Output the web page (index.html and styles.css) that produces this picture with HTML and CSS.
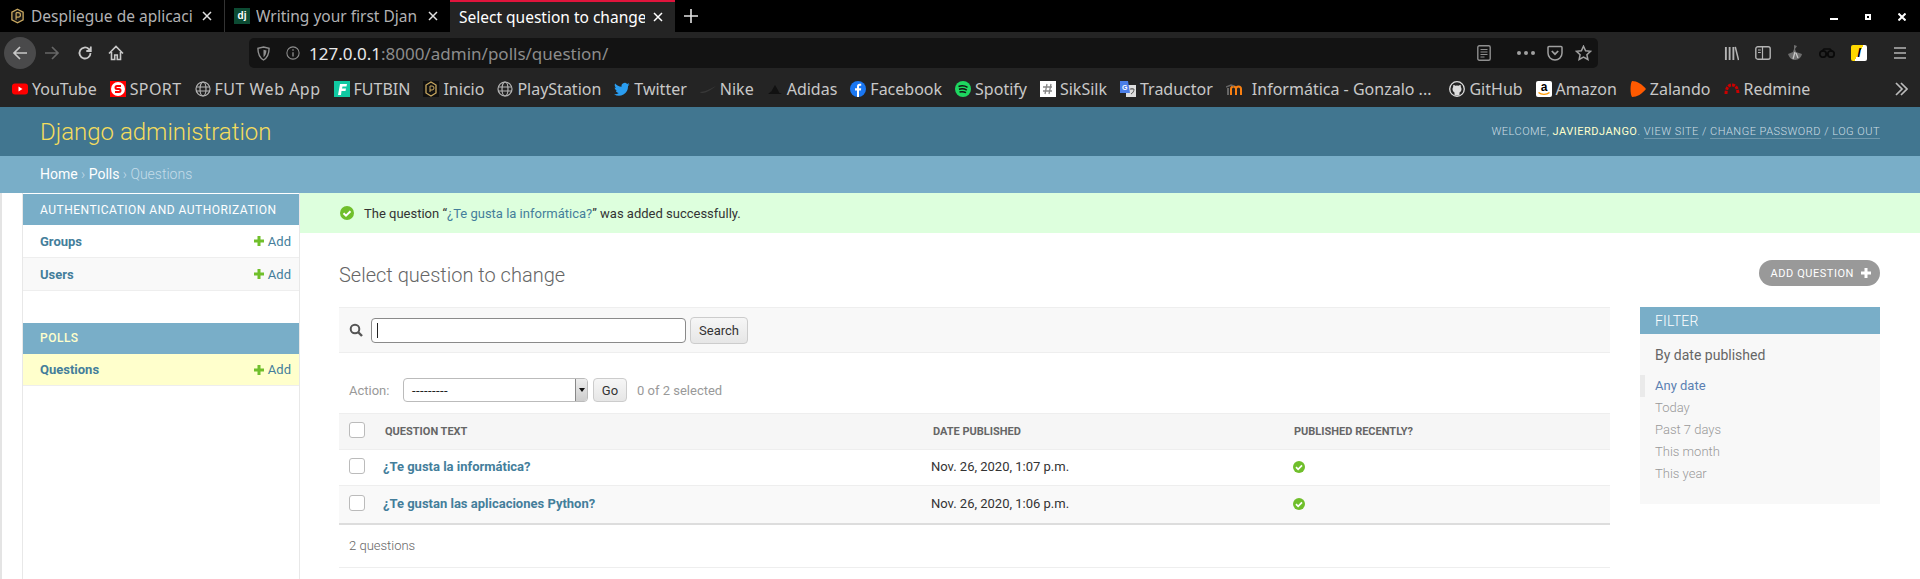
FILE: index.html
```html
<!DOCTYPE html>
<html lang="es">
<head>
<meta charset="utf-8">
<title>Select question to change</title>
<link rel="stylesheet" href="styles.css">
</head>
<body>
<div class="browser">
  <div class="tabbar">
    <div class="tab tab-sep">
      <svg class="fav" viewBox="0 0 16 16"><path d="M8 .8l6 3.200v8l-6 3.200-6-3.200V4z" fill="#151515" stroke="#c9a860" stroke-width="1.400"/><path d="M6.500 12V4.500M6.500 4.500h2.300a2.300 2.300 0 010 4.600H6.500" fill="none" stroke="#c9a860" stroke-width="1.300"/></svg>
      <span class="tab-title">Despliegue de aplicaci</span><svg class="tab-x" viewBox="0 0 10 10"><path d="M1 1l8 8M9 1l-8 8" stroke="#e0e0e0" stroke-width="1.500"/></svg>
    </div>
    <div class="tab tab-second">
      <span class="dj">dj</span>
      <span class="tab-title">Writing your first Djan</span><svg class="tab-x" viewBox="0 0 10 10"><path d="M1 1l8 8M9 1l-8 8" stroke="#e0e0e0" stroke-width="1.500"/></svg>
    </div>
    <div class="tab tab-active">
      <span class="tab-title">Select question to change</span><svg class="tab-x" viewBox="0 0 10 10"><path d="M1 1l8 8M9 1l-8 8" stroke="#fff" stroke-width="1.500"/></svg>
    </div>
    <svg class="newtab" viewBox="0 0 14 14"><path d="M7 0v14M0 7h14" stroke="#e4e4e4" stroke-width="1.600"/></svg>
    <div class="winbtns">
      <span class="win-min"></span><span class="win-max"></span>
      <svg class="win-x" viewBox="0 0 8 8"><path d="M.5.5l7 7M7.500.5l-7 7" stroke="#fff" stroke-width="2"/></svg>
    </div>
  </div>
  <div class="toolbar">
    <span class="backbtn"><svg viewBox="0 0 16 16"><path d="M15 8H2M8 2L2 8l6 6" fill="none" stroke="#c8c8c8" stroke-width="1.700"/></svg></span>
    <svg class="tool t-fwd" viewBox="0 0 16 16"><path d="M1 8h13M8 2l6 6-6 6" fill="none" stroke="#666" stroke-width="1.700"/></svg>
    <svg class="tool t-rel" viewBox="0 0 16 16"><path d="M13.500 8a5.500 5.500 0 11-1.700-4l1.700 1.700M13.800 1.500v4.500H9.300" fill="none" stroke="#c8c8c8" stroke-width="1.800"/></svg>
    <svg class="tool t-home" viewBox="0 0 16 16"><path d="M1 8.500L8 1.500l7 7M3.500 7v7.500h3.200v-4.500h2.600v4.500h3.200V7" fill="none" stroke="#c8c8c8" stroke-width="1.600"/></svg>
    <div class="urlbar">
      <svg class="u-shield" viewBox="0 0 14 16"><path d="M7 1l6 1.500c0 6.500-2 10-6 12.500C3 12.500 1 9 1 2.500z" fill="none" stroke="#8f8f8f" stroke-width="1.500"/><path d="M7 4l3.200.8C10 8 9 10.500 7 12z" fill="#8f8f8f"/></svg>
      <svg class="u-info" viewBox="0 0 16 16"><circle cx="8" cy="8" r="7" fill="none" stroke="#8f8f8f" stroke-width="1.200"/><path d="M8 7v5M8 3.800v1.700" stroke="#8f8f8f" stroke-width="1.500"/></svg>
      <span class="url"><span class="url-host">127.0.0.1</span>:8000/admin/polls/question/</span>
      <svg class="u-reader" viewBox="0 0 14 16"><rect x=".8" y=".8" width="12.400" height="14.400" rx="1.500" fill="none" stroke="#8f8f8f" stroke-width="1.400"/><path d="M3.500 4.500h7M3.500 7h7M3.500 9.500h7M3.500 12h4" stroke="#8f8f8f" stroke-width="1.100"/></svg>
      <span class="u-dots"><i></i><i></i><i></i></span>
      <svg class="u-pocket" viewBox="0 0 16 16"><path d="M2 1.500h12a1 1 0 011 1V8a7 7 0 01-14 0V2.500a1 1 0 011-1z" fill="none" stroke="#a0a0a0" stroke-width="1.500"/><path d="M4.800 6l3.200 3.200L11.200 6" fill="none" stroke="#a0a0a0" stroke-width="1.700"/></svg>
      <svg class="u-star" viewBox="0 0 16 16"><path d="M8 1.200l2.100 4.500 4.900.6-3.600 3.400 1 4.800L8 12.100l-4.400 2.400 1-4.800L1 6.300l4.900-.6z" fill="none" stroke="#a0a0a0" stroke-width="1.500"/></svg>
    </div>
    <div class="tool-right">
      <svg class="t-lib" viewBox="0 0 16 16"><path d="M2 1v14M6 1v14M10 1v14" stroke="#b4b4b4" stroke-width="2" fill="none"/><path d="M12 1l3.500 14" stroke="#b4b4b4" stroke-width="1.600"/></svg>
      <svg class="t-side" viewBox="0 0 16 14"><rect x=".8" y=".8" width="14.400" height="12.400" rx="2" fill="none" stroke="#b4b4b4" stroke-width="1.400"/><path d="M7.500 1v12M3 4h2.800M3 6.500h2.800" stroke="#b4b4b4" stroke-width="1.200"/></svg>
      <svg class="t-ext1" viewBox="0 0 16 16"><path d="M7 0l3 1-2 3 1 3 6 2c-.5 3-3.500 6-7 6s-6-3-7-6l5-2 1-3z" fill="#6e6e6e"/><path d="M8 7l-2 7M9 8l2 5" stroke="#c8c8c8" stroke-width="1.300"/></svg>
      <svg class="t-ext2" viewBox="0 0 16 10"><circle cx="4" cy="6" r="3.200" fill="none" stroke="#0a0a0a" stroke-width="1.800"/><circle cx="12" cy="6" r="3.200" fill="none" stroke="#0a0a0a" stroke-width="1.800"/><path d="M3 3l2-2h6l2 2" fill="none" stroke="#0a0a0a" stroke-width="1.500"/></svg>
      <span class="t-ext3"><i>l</i></span>
      <svg class="t-menu" viewBox="0 0 12 12"><path d="M0 1h12M0 6h12M0 11h12" stroke="#b4b4b4" stroke-width="1.600"/></svg>
    </div>
  </div>
  <div class="bookmarks">
    <span class="bm"><svg class="bi" viewBox="0 0 16 16"><rect y="2.500" width="16" height="11" rx="3" fill="#f00"/><path d="M6.500 5.500v5l4-2.500z" fill="#fff"/></svg>YouTube</span>
    <span class="bm bm-sport"><svg class="bi" viewBox="0 0 16 16"><rect width="16" height="16" fill="#f00"/><circle cx="8" cy="8" r="7" fill="#fff"/><path d="M11 5H7a1.500 1.500 0 000 3h2a1.500 1.500 0 010 3H5" fill="none" stroke="#f00" stroke-width="2"/></svg>SPORT</span>
    <span class="bm bm-fut"><svg class="bi" viewBox="0 0 16 16"><g fill="none" stroke="#b4b4b4" stroke-width="1.200"><circle cx="8" cy="8" r="7"/><ellipse cx="8" cy="8" rx="3" ry="7"/><path d="M1 6h14M1 10h14"/></g></svg>FUT Web App</span>
    <span class="bm"><svg class="bi" viewBox="0 0 16 16"><rect width="16" height="16" fill="#10c9a2"/><path d="M4 14L6 3h7l-.5 2.500H8.500L8 7.500h4l-.5 2.500h-4L7 14z" fill="#fff"/></svg>FUTBIN</span>
    <span class="bm"><svg class="bi" viewBox="0 0 16 16"><rect width="16" height="16" fill="#111"/><path d="M8 1l5 3v8l-5 3-5-3V4z" fill="none" stroke="#c9a860" stroke-width="1.300"/><path d="M7 11V5h2a2 2 0 010 4H7" fill="none" stroke="#c9a860"/></svg>Inicio</span>
    <span class="bm"><svg class="bi" viewBox="0 0 16 16"><g fill="none" stroke="#b4b4b4" stroke-width="1.200"><circle cx="8" cy="8" r="7"/><ellipse cx="8" cy="8" rx="3" ry="7"/><path d="M1 6h14M1 10h14"/></g></svg>PlayStation</span>
    <span class="bm"><svg class="bi" viewBox="0 0 16 16"><path d="M15.500 3.300c-.6.300-1.200.4-1.800.5.600-.4 1.100-1 1.400-1.700-.6.400-1.300.6-2 .8a3.200 3.200 0 00-5.500 2.900C5 5.700 2.700 4.400 1.100 2.500c-.8 1.400-.4 3.300 1 4.300-.5 0-1-.2-1.400-.4 0 1.600 1.100 2.900 2.600 3.200-.5.100-1 .2-1.500.1.400 1.300 1.600 2.200 3 2.200A6.500 6.500 0 010 13.200 9.100 9.100 0 0014 5.100c.6-.4 1.100-1 1.500-1.800z" fill="#2a9df0"/></svg>Twitter</span>
    <span class="bm"><svg class="bi" viewBox="0 0 16 16"><path d="M0 11c4 0 10-3 16-6-5 4-10 7-13 7-2 0-3-.500-3-1z" fill="#383838"/></svg>Nike</span>
    <span class="bm"><svg class="bi" viewBox="0 0 16 16"><path d="M1 13l3-2.500L5.500 13zM4.500 10L8 4l3.500 6 1 3h-9zM12 13l-1-2 2 1 2 1z" fill="#111"/></svg>Adidas</span>
    <span class="bm"><svg class="bi" viewBox="0 0 16 16"><circle cx="8" cy="8" r="8" fill="#1a77f2"/><path d="M7 16V9.500H5V7.200h2V5.500C7 3.700 8 2.700 9.700 2.700c.7 0 1.300.1 1.500.1v2h-1c-.9 0-1.200.5-1.200 1.100v1.300h2.200l-.3 2.300H9V16z" fill="#fff"/></svg>Facebook</span>
    <span class="bm"><svg class="bi" viewBox="0 0 16 16"><circle cx="8" cy="8" r="8" fill="#1ed760"/><path d="M3.500 5.500c3-1 6.500-.7 9 .8M4 8.300c2.600-.8 5.500-.5 7.800.8M4.500 11c2.200-.6 4.500-.4 6.500.7" fill="none" stroke="#111" stroke-width="1.500"/></svg>Spotify</span>
    <span class="bm"><svg class="bi" viewBox="0 0 16 16"><rect width="16" height="16" fill="#fff"/><path d="M5 13l2-10M9 13l2-10M3 6h9M3 10h9" stroke="#888" stroke-width="1.300"/></svg>SikSilk</span>
    <span class="bm"><svg class="bi" viewBox="0 0 16 16"><rect x="6" y="4" width="10" height="12" fill="#ddd"/><path d="M0 0h8l2 12H0z" fill="#4a7ee8"/><path d="M10 8h4M12 7v1M11 13c2-1 3-3 3-5" stroke="#555" fill="none"/><text x="2" y="8.500" class="gt">G</text></svg>Traductor</span>
    <span class="bm bm-wide"><svg class="bi" viewBox="0 0 16 16"><path d="M5 14V8a2.500 2.500 0 015 0v6M10 8a2.500 2.500 0 015 0v6" fill="none" stroke="#f98012" stroke-width="2"/><path d="M2 14V7" stroke="#666" stroke-width="2"/><path d="M0 6l5-2 3 1" fill="none" stroke="#666" stroke-width="1.400"/></svg>Informática - Gonzalo ...</span>
    <span class="bm"><svg class="bi" viewBox="0 0 16 16"><circle cx="8" cy="8" r="7.300" fill="none" stroke="#ddd" stroke-width="1.300"/><path d="M5.500 14.500v-3c-1-.6-2-1.500-2-3.500 0-.8.300-1.500.7-2-.1-.5-.1-1.200.2-2 .9 0 1.600.5 2 .8a6 6 0 013.200 0c.4-.3 1.100-.8 2-.8.300.8.300 1.500.2 2 .4.500.7 1.200.7 2 0 2-1 2.900-2 3.500v3z" fill="#ddd"/></svg>GitHub</span>
    <span class="bm"><svg class="bi" viewBox="0 0 16 16"><rect width="16" height="16" rx="2" fill="#fff"/><text x="8" y="10" class="az">a</text><path d="M2.500 11.500c3 2.500 8 2.500 11 0" fill="none" stroke="#f90" stroke-width="1.400"/></svg>Amazon</span>
    <span class="bm"><svg class="bi" viewBox="0 0 16 16"><path d="M2 0c5 0 10 3 14 8-4 5-9 8-14 8-2-3-2-13 0-16z" fill="#ff5a00"/></svg>Zalando</span>
    <span class="bm"><svg class="bi" viewBox="0 0 16 16"><path d="M2 13C2 8 4 4 8 4s6 4 6 9" fill="none" stroke="#c00" stroke-width="3" stroke-dasharray="3 1"/></svg>Redmine</span>
    <svg class="chev" viewBox="0 0 14 14"><path d="M2 1l6 6-6 6M7 1l6 6-6 6" fill="none" stroke="#bbb" stroke-width="1.700"/></svg>
  </div>
</div>

<header class="dj-header">
  <div class="branding">Django administration</div>
  <div class="usertools">WELCOME, <strong>JAVIERDJANGO</strong>. <a>VIEW SITE</a> / <a>CHANGE PASSWORD</a> / <a>LOG OUT</a></div>
</header>
<div class="crumbs"><a>Home</a> › <a>Polls</a> › Questions</div>

<div class="main">
  <div class="gutter"></div>
  <nav class="sidebar">
    <section class="app">
      <div class="caption">AUTHENTICATION AND AUTHORIZATION</div>
      <div class="model"><a>Groups</a><span class="addlink"><svg class="plus" viewBox="0 0 10 10"><path d="M5 0v10M0 5h10" stroke="#70bf2b" stroke-width="3"/></svg>Add</span></div>
      <div class="model alt"><a>Users</a><span class="addlink"><svg class="plus" viewBox="0 0 10 10"><path d="M5 0v10M0 5h10" stroke="#70bf2b" stroke-width="3"/></svg>Add</span></div>
    </section>
    <section class="app">
      <div class="caption current-cap">POLLS</div>
      <div class="model current"><a>Questions</a><span class="addlink"><svg class="plus" viewBox="0 0 10 10"><path d="M5 0v10M0 5h10" stroke="#70bf2b" stroke-width="3"/></svg>Add</span></div>
    </section>
  </nav>
  <main class="content">
    <div class="message">
      <svg class="okbig" viewBox="0 0 14 14"><circle cx="7" cy="7" r="7" fill="#70bf2b"/><path d="M3.500 7.200l2.500 2.500 4.500-4.500" fill="none" stroke="#fff" stroke-width="2"/></svg>
      <span>The question “<a>¿Te gusta la informática?</a>” was added successfully.</span>
    </div>
    <div class="inner">
      <div class="titlerow">
        <h1>Select question to change</h1>
        <span class="addbtn">ADD QUESTION<svg class="plus-w" viewBox="0 0 10 10"><path d="M5 0v10M0 5h10" stroke="#fff" stroke-width="3"/></svg></span>
      </div>
      <div class="columns">
        <div class="changelist">
          <div class="searchbar">
            <svg class="mag" viewBox="0 0 14 14"><circle cx="6" cy="6" r="4.300" fill="none" stroke="#555" stroke-width="2"/><path d="M9 9l4 4" stroke="#555" stroke-width="2.400"/></svg>
            <span class="searchinput"><i class="caret"></i></span>
            <span class="btn searchbtn">Search</span>
          </div>
          <div class="actions">
            <span class="act-label">Action:</span>
            <span class="select"><span class="sel-text">---------</span><span class="sel-arrow"></span></span>
            <span class="btn gobtn">Go</span>
            <span class="act-count">0 of 2 selected</span>
          </div>
          <div class="table">
            <div class="row head">
              <span class="c-check"><i class="cb"></i></span><span class="c-q">QUESTION TEXT</span><span class="c-d">DATE PUBLISHED</span><span class="c-r">PUBLISHED RECENTLY?</span>
            </div>
            <div class="row">
              <span class="c-check"><i class="cb"></i></span><a class="c-q">¿Te gusta la informática?</a><span class="c-d">Nov. 26, 2020, 1:07 p.m.</span><span class="c-r"><svg class="oksm" viewBox="0 0 14 14"><circle cx="7" cy="7" r="7" fill="#70bf2b"/><path d="M3.500 7.200l2.500 2.500 4.500-4.500" fill="none" stroke="#fff" stroke-width="2"/></svg></span>
            </div>
            <div class="row alt last">
              <span class="c-check"><i class="cb"></i></span><a class="c-q">¿Te gustan las aplicaciones Python?</a><span class="c-d">Nov. 26, 2020, 1:06 p.m.</span><span class="c-r"><svg class="oksm" viewBox="0 0 14 14"><circle cx="7" cy="7" r="7" fill="#70bf2b"/><path d="M3.500 7.200l2.500 2.500 4.500-4.500" fill="none" stroke="#fff" stroke-width="2"/></svg></span>
            </div>
          </div>
          <div class="paginator">2 questions</div>
        </div>
        <aside class="filter">
          <div class="filter-head">FILTER</div>
          <div class="filter-sub">By date published</div>
          <ul class="filter-list">
            <li class="selected">Any date</li>
            <li>Today</li>
            <li>Past 7 days</li>
            <li>This month</li>
            <li>This year</li>
          </ul>
        </aside>
      </div>
    </div>
  </main>
</div>
</body>
</html>
```
FILE: styles.css
```css
* { box-sizing: border-box; }
html, body { margin: 0; padding: 0; height: 579px; overflow: hidden; background: #fff; }
body { font-family: Roboto, "Liberation Sans", sans-serif; color: #333; font-size: 13px; }
svg { display: block; flex: none; }

.browser { font-family: "Noto Sans", "Open Sans", sans-serif; background: #242424; }
.tabbar { height: 32px; background: #000; display: flex; align-items: stretch; }
.tab { width: 225px; display: flex; align-items: center; padding: 0 12px 0 10px; color: #b1b1b3; font-size: 15.500px; flex: none; }
.tab-sep { border-right: 1px solid #333; }
.tab-second { padding-left: 9px; }
.tab-active { background: #242424; color: #fff; border-top: 2px solid #e0143c; padding-left: 9px; }
.tab-title { flex: 1; overflow: hidden; white-space: nowrap; min-width: 0; }
.tab-x { width: 10px; height: 10px; margin-left: 8px; }
.fav { width: 15px; height: 16px; margin-right: 6px; }
.dj { width: 16px; height: 16px; background: #0c4b33; color: #fff; font: bold 10px/15px "Liberation Sans", sans-serif; text-align: center; margin-right: 6px; flex: none; }
.newtab { width: 14px; height: 14px; margin: auto 0 auto 9px; }
.winbtns { margin-left: auto; display: flex; align-items: center; gap: 27px; padding-right: 14px; }
.win-min { width: 8px; height: 2px; background: #fff; margin-top: 6px; }
.win-max { width: 6px; height: 6px; border: 2px solid #fff; margin-top: 1px; }
.win-x { width: 8px; height: 8px; margin-top: 1px; }

.toolbar { height: 38px; display: flex; align-items: center; padding: 4px 0 0 4px; background: #242424; }
.backbtn { width: 32px; height: 32px; border-radius: 50%; background: #4a4a4b; display: flex; align-items: center; justify-content: center; flex: none; }
.backbtn svg { width: 16px; height: 16px; }
.tool { width: 16px; height: 16px; }
.t-fwd { margin-left: 8px; }
.t-rel { margin-left: 17px; }
.t-home { margin-left: 15px; }
.urlbar { margin-left: 125px; width: 1349px; height: 30px; background: #131313; border-radius: 5px; display: flex; align-items: center; padding-left: 8px; flex: none; }
.u-shield { width: 13px; height: 15px; margin-right: 16px; }
.u-info { width: 14px; height: 14px; margin-right: 9px; }
.url { font-size: 17px; color: #8c8c8c; white-space: nowrap; }
.url-host { color: #e8e8e8; }
.u-reader { width: 14px; height: 16px; margin-left: auto; }
.u-dots { display: flex; gap: 3px; margin-left: 26px; }
.u-dots i { width: 4px; height: 4px; border-radius: 50%; background: #a0a0a0; }
.u-pocket { width: 16px; height: 16px; margin-left: 12px; }
.u-star { width: 17px; height: 16px; margin-left: 12px; margin-right: 6px; }
.tool-right { flex: 1; display: flex; align-items: center; padding-left: 126px; }
.t-lib { width: 15px; height: 15px; }
.t-side { width: 16px; height: 14px; margin-left: 16px; }
.t-ext1 { width: 16px; height: 16px; margin-left: 16px; }
.t-ext2 { width: 16px; height: 10px; margin-left: 16px; }
.t-ext3 { width: 16px; height: 16px; margin-left: 16px; background: linear-gradient(120deg, #ffd800 50%, #fff 50%); border-radius: 2px; color: #000; font: italic bold 13px/16px "Liberation Sans", sans-serif; text-align: center; }
.t-ext3 i { font-style: inherit; }
.t-menu { width: 12px; height: 12px; margin-left: 27px; }

.bookmarks { height: 37px; display: flex; align-items: center; padding-left: 12px; color: #c8c8c8; font-size: 16px; background: #242424; }
.bm { display: flex; align-items: center; gap: 4px; margin-right: 13px; white-space: nowrap; }
.bi { width: 16px; height: 16px; }
.bm-sport { letter-spacing: .4px; }
.bm-fut { letter-spacing: .5px; }
.bm-wide { gap: 10px; margin-right: 18px; }
.gt { font: bold 7px "Liberation Sans", sans-serif; fill: #fff; }
.az { font: bold 12px "Liberation Sans", sans-serif; fill: #000; text-anchor: middle; }
.chev { width: 14px; height: 14px; margin-left: auto; margin-right: 12px; }

.dj-header { height: 49px; background: #417690; display: flex; align-items: center; justify-content: space-between; padding: 0 40px; }
.branding { font-size: 24px; font-weight: 300; color: #f5dd5d; }
.usertools { font-size: 11px; letter-spacing: .49px; color: #cfdfe5; font-weight: 300; }
.usertools strong { font-weight: 400; color: #ffc; }
.usertools a { border-bottom: 1px solid rgba(255,255,255,.25); color: #d0dee4; }
.crumbs { height: 37px; background: #79aec8; padding: 0 40px; line-height: 37px; color: #c4dce8; font-size: 14px; font-weight: 300; }
.crumbs a { color: #fff; font-weight: 400; }

.main { display: flex; height: 386px; }
.gutter { width: 23px; border-left: 2px solid #e4e4e4; border-right: 1px solid #e8e8e8; flex: none; }
.sidebar { width: 277px; flex: none; border-right: 1px solid #e8e8e8; }
.app { margin-bottom: 31px; padding-top: 1px; }
.caption { height: 31px; background: #79aec8; color: #fff; font-size: 12px; letter-spacing: .49px; padding-left: 17px; line-height: 32px; }
.current-cap { color: #ffc; font-weight: 500; line-height: 31px; }
.model { height: 33px; display: flex; align-items: center; justify-content: space-between; border-bottom: 1px solid #eee; padding: 0 8px 0 17px; font-size: 13px; }
.model a { color: #447e9b; font-weight: 700; }
.model.alt { background: #f9f9f9; }
.model.current { background: #ffc; height: 32px; }
.addlink { display: flex; align-items: center; color: #447e9b; font-weight: 400; gap: 4px; }
.plus { width: 10px; height: 10px; }

.content { flex: 1; min-width: 0; }
.message { height: 40px; background: #dfd; display: flex; align-items: center; padding-left: 40px; gap: 10px; font-size: 13px; color: #333; }
.message a { color: #447e9b; }
.okbig { width: 14px; height: 14px; }
.inner { padding: 0 40px 0 39px; }
.titlerow { height: 74px; display: flex; align-items: center; justify-content: space-between; padding-top: 10px; }
h1 { font-size: 20px; font-weight: 300; color: #666; margin: 0; }
.addbtn { height: 26px; background: #999; border-radius: 13px; color: #fff; font-size: 11px; letter-spacing: .55px; display: flex; align-items: center; padding: 0 9px 0 12px; gap: 7px; margin-top: -4px; }
.plus-w { width: 10px; height: 10px; }

.columns { display: flex; gap: 30px; align-items: flex-start; }
.changelist { width: 1271px; flex: none; }
.searchbar { height: 46px; background: #f8f8f8; border-top: 1px solid #eee; border-bottom: 1px solid #eee; display: flex; align-items: center; padding-left: 10px; }
.mag { width: 14px; height: 14px; margin-right: 8px; }
.searchinput { width: 315px; height: 25px; background: #fff; border: 1px solid #8a8a8a; border-radius: 4px; display: flex; align-items: center; padding-left: 5px; }
.caret { width: 1px; height: 15px; background: #222; }
.btn { background: linear-gradient(#f6f6f6, #e6e6e6); border: 1px solid #ccc; border-radius: 4px; color: #333; font-size: 13px; display: flex; align-items: center; justify-content: center; }
.searchbtn { width: 58px; height: 27px; margin-left: 4px; }
.actions { height: 60px; display: flex; align-items: center; padding: 14px 0 0 10px; font-size: 13px; }
.act-label { color: #999; width: 54px; }
.select { width: 185px; height: 24px; background: #fff; border: 1px solid #bbb; border-radius: 4px; display: flex; align-items: center; justify-content: space-between; font-size: 13px; letter-spacing: .4px; color: #222; padding-left: 8px; overflow: hidden; }
.sel-arrow { width: 12px; height: 24px; background: linear-gradient(#eee, #ccc); border-left: 1px solid #888; position: relative; display: block; }
.sel-arrow::after { content: ""; position: absolute; left: 3px; top: 10px; border: 3px solid transparent; border-top: 4px solid #111; }
.gobtn { width: 34px; height: 24px; margin-left: 5px; }
.act-count { color: #999; margin-left: 10px; }
.table { border-bottom: 2px solid #ddd; }
.row { height: 36px; display: flex; align-items: center; border-bottom: 1px solid #eee; padding-bottom: 3px; font-size: 13px; color: #333; }
.row.head { background: #f6f6f6; border-top: 1px solid #eee; height: 37px; padding-bottom: 0; font-size: 11px; font-weight: 700; color: #666; }
.row.alt { background: #f9f9f9; height: 37px; }
.row.last { border-bottom: 0; }
.row a { color: #447e9b; font-weight: 700; }
.c-check { width: 44px; padding-left: 10px; flex: none; }
.head .c-check { padding-bottom: 3px; }
.cb { display: block; width: 16px; height: 16px; border: 1px solid #bbb; border-radius: 3px; background: #fff; }
.c-q { width: 548px; flex: none; }
.head .c-q { padding-left: 2px; }
.c-d { width: 362px; flex: none; }
.head .c-d { padding-left: 2px; }
.c-r { flex: 1; }
.head .c-r { padding-left: 1px; }
.oksm { width: 12px; height: 12px; margin-top: 1px; }
.paginator { height: 43px; padding: 0 10px 2px; display: flex; align-items: center; color: #666; font-size: 13px; font-weight: 300; border-bottom: 1px solid #eee; }

.filter { width: 240px; flex: none; background: #f8f8f8; height: 197px; }
.filter-head { height: 27px; background: #79aec8; color: #fff; font-size: 14px; letter-spacing: .2px; font-weight: 300; padding-left: 15px; line-height: 28px; }
.filter-sub { font-size: 14px; color: #666; padding: 12px 15px 0; line-height: 18px; font-weight: 400; }
.filter-list { list-style: none; margin: 11px 0 0; padding: 0; }
.filter-list li { height: 22px; line-height: 22px; font-size: 13px; color: #999; font-weight: 300; border-left: 5px solid transparent; padding-left: 10px; }
.filter-list li.selected { color: #5b80b2; border-left-color: #eaeaea; font-weight: 400; }
```
